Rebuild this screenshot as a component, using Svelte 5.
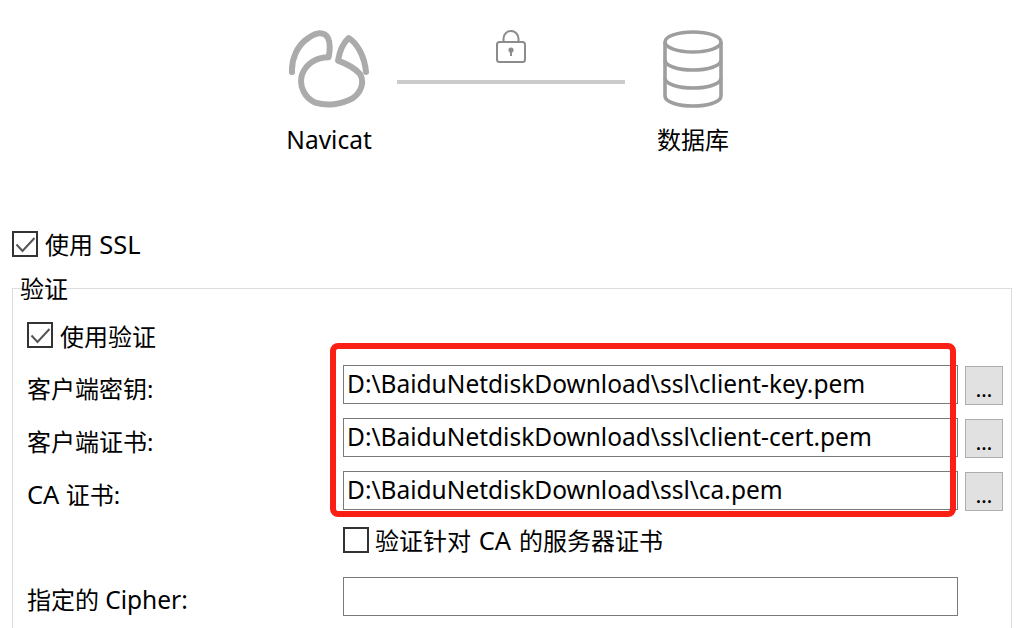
<script>
	const certFields = [
		{ label: '客户端密钥:', value: 'D:\\BaiduNetdiskDownload\\ssl\\client-key.pem' },
		{ label: '客户端证书:', value: 'D:\\BaiduNetdiskDownload\\ssl\\client-cert.pem' }
	];
	const caValue = 'D:\\BaiduNetdiskDownload\\ssl\\ca.pem';
</script>

{#snippet tick()}
	<svg viewBox="0 0 26 26" width="26" height="26" aria-hidden="true">
		<path d="M4.5 13.5L10.5 20L22.5 7" fill="none" stroke="#555" stroke-width="2" />
	</svg>
{/snippet}

<div class="page">
	<div class="diagram">
		<div class="node">
			<svg class="node-icon" viewBox="57 60 240 234" width="80" height="78" aria-hidden="true">
				<path
					d="M66 186C64 150 80 105 118 82C138 68 162 62 174 84C182 100 180 120 176 142C140 142 108 160 96 194C86 228 104 264 136 278C170 288 214 284 246 266C274 248 284 216 270 192C254 174 226 160 204 152C208 128 218 100 236 84C262 100 284 140 288 186"
					fill="none"
					stroke="#ababab"
					stroke-width="18"
					stroke-linecap="round"
					stroke-linejoin="round"
				/>
			</svg>
			<span class="node-label latin">Navicat</span>
		</div>

		<div class="link">
			<svg class="lock" viewBox="0 0 30 33" width="30" height="33" aria-hidden="true">
				<rect x="1" y="12" width="28" height="20" rx="2.5" fill="none" stroke="#8c8c8c" stroke-width="2" />
				<path d="M7.5 12V8.5a7.5 7.5 0 0 1 15 0V12" fill="none" stroke="#8c8c8c" stroke-width="2" />
				<circle cx="15" cy="20" r="2.6" fill="#8c8c8c" />
				<rect x="14" y="20" width="2" height="6" fill="#8c8c8c" />
			</svg>
			<div class="link-line"></div>
		</div>

		<div class="node">
			<svg class="node-icon" viewBox="0 0 60 78" width="60" height="78" aria-hidden="true">
				<g fill="none" stroke="#9e9e9e" stroke-width="3.6">
					<ellipse cx="30" cy="12" rx="28" ry="10" />
					<path d="M2 12V66C2 72 15 76 30 76S58 72 58 66V12" />
					<path d="M2 30C2 36 15 40 30 40S58 36 58 30" />
					<path d="M2 48C2 54 15 58 30 58S58 54 58 48" />
				</g>
			</svg>
			<span class="node-label">数据库</span>
		</div>
	</div>

	<label class="check ssl">
		<span class="box">{@render tick()}</span>
		<span class="check-text">使用 <span class="wide">SSL</span></span>
	</label>

	<section class="group">
		<span class="legend">验证</span>

		<label class="check use-auth">
			<span class="box">{@render tick()}</span>
			<span class="check-text">使用验证</span>
		</label>

		<div class="form">
			{#each certFields as field}
				<span class="field-label">{field.label}</span>
				<div class="input">{field.value}</div>
				<button class="browse" type="button">...</button>
			{/each}

			<span class="field-label"><span class="wide">CA</span> 证书:</span>
			<div class="input">{caValue}</div>
			<button class="browse" type="button">...</button>

			<label class="check verify">
				<span class="box"></span>
				<span class="check-text">验证针对 <span class="wide">CA</span> 的服务器证书</span>
			</label>

			<span class="field-label cipher">指定的 <span class="latin">Cipher:</span></span>
			<div class="input cipher-input"></div>
		</div>

		<!-- red annotation drawn over the screenshot -->
		<div class="highlight"></div>
	</section>
</div>

<style>
	:global(body) {
		background: #fff;
		overflow: hidden;
	}

	.page {
		position: relative;
		height: 628px;
		overflow: hidden;
		background: #fff;
		color: #000;
		font-family: 'Noto Sans', 'Noto Sans CJK SC', sans-serif;
		font-size: 24px;
		line-height: 32px;
	}

	.latin {
		font-size: 24.5px;
		line-height: 1;
	}

	.wide {
		font-size: 25.5px;
		line-height: 1;
	}

	.diagram {
		display: flex;
		justify-content: center;
		gap: 28px;
		padding: 30px 2px 0 0;
		height: 205px;
		box-sizing: border-box;
	}

	.node {
		display: flex;
		flex-direction: column;
		align-items: center;
		width: 80px;
	}

	.node-icon {
		display: block;
	}

	.node-label {
		margin-top: 16px;
		line-height: 32px;
		white-space: nowrap;
	}

	.link {
		display: flex;
		flex-direction: column;
		align-items: center;
		width: 228px;
	}

	.lock {
		display: block;
	}

	.link-line {
		width: 100%;
		height: 4px;
		margin-top: 17px;
		background: #cbcbcb;
	}

	.check {
		display: flex;
		align-items: center;
		gap: 7px;
		height: 32px;
		white-space: nowrap;
	}

	.check-text {
		margin-top: 2px;
	}

	.box {
		position: relative;
		flex: none;
		width: 26px;
		height: 26px;
		box-sizing: border-box;
		border: 2px solid #333;
		background: #fff;
	}

	.box svg {
		display: block;
		margin: -2px;
	}

	.ssl {
		margin: 23px 0 0 12px;
	}

	.group {
		position: relative;
		margin: 28px 12px 0 12px;
		height: 400px;
		border: 1px solid #ddd;
		box-sizing: border-box;
		padding: 31px 0 0 14px;
	}

	.legend {
		position: absolute;
		left: 7px;
		top: -16px;
		line-height: 32px;
	}

	.form {
		display: grid;
		grid-template-columns: 316px 615px 38px;
		column-gap: 0;
		margin-top: 14px;
		align-items: center;
	}

	.use-auth {
		margin-top: -1px;
	}

	.use-auth .check-text {
		margin-top: 4px;
	}

	.field-label {
		white-space: nowrap;
		margin-bottom: 5px;
	}

	.input {
		height: 39px;
		box-sizing: border-box;
		border: 1px solid #7a7a7a;
		padding: 0 3px;
		font-size: 24.5px;
		line-height: 36px;
		white-space: nowrap;
		margin-bottom: 14px;
	}

	.browse {
		width: 38px;
		height: 39px;
		margin: 1px 0 13px 7px;
		padding: 8px 0 0 0;
		border: 1px solid #adadad;
		background: #e1e1e1;
		color: #000;
		font: inherit;
		font-size: 20px;
		font-weight: 500;
		line-height: 20px;
	}

	.verify {
		grid-column: 2 / 4;
		margin-bottom: 21px;
		gap: 6px;
		word-spacing: 1.5px;
	}

	.cipher {
		grid-column: 1;
		margin-bottom: 0;
		margin-top: 7px;
	}

	.cipher-input {
		grid-column: 2;
		margin-bottom: 0;
	}

	.highlight {
		position: absolute;
		left: 317px;
		top: 54px;
		width: 626px;
		height: 174px;
		box-sizing: border-box;
		border: 6px solid #fb1f16;
		border-radius: 8px;
	}
</style>
